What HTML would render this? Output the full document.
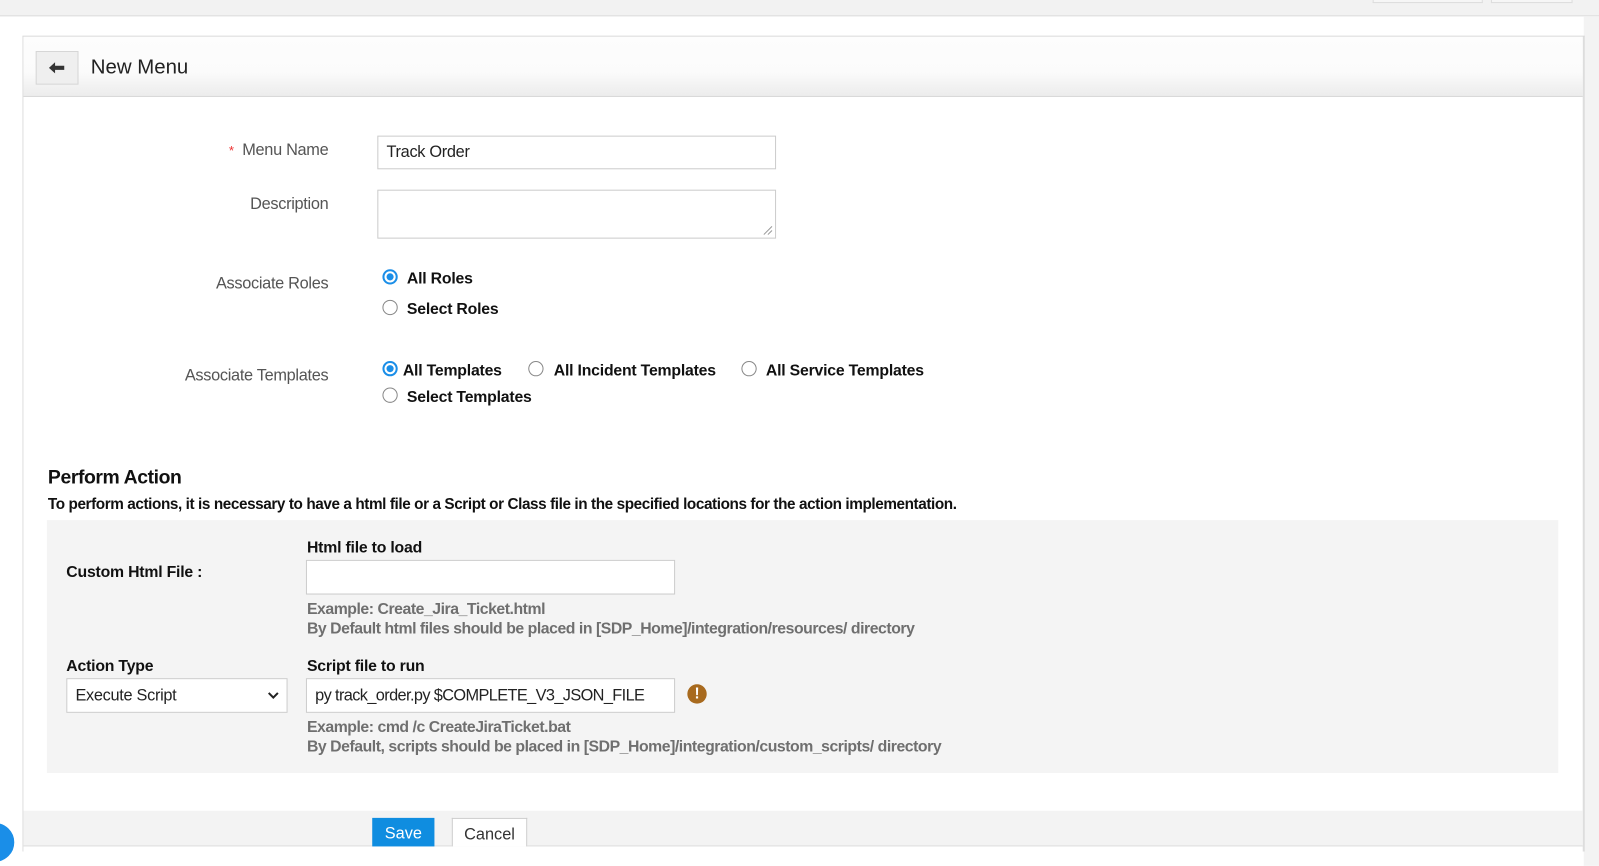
<!DOCTYPE html>
<html><head><meta charset="utf-8"><style>
*{box-sizing:border-box;margin:0;padding:0}
html,body{width:1599px;height:849px;overflow:hidden;background:#fff}
#w{position:absolute;left:0;top:0;width:1568px;height:833px;transform:scale(1.0198);transform-origin:0 0;font-family:"Liberation Sans",sans-serif;color:#222}
.a{position:absolute;white-space:nowrap}
.lbl{font-size:16px;color:#555;letter-spacing:-0.3px;text-align:right;width:200px}
.b{font-weight:bold;font-size:15.5px;letter-spacing:-0.2px;color:#111}
.g{font-weight:bold;font-size:15.5px;letter-spacing:-0.45px;color:#6f6f6f}
.inp{position:absolute;border:1px solid #ccc;background:#fff;font-size:16px;letter-spacing:-0.3px;padding-left:8px;color:#222}
.r{position:absolute;width:15px;height:15px;border-radius:50%;border:1px solid #888;background:#fff}
.r.on{border:2px solid #1a8ee8}
.r.on:after{content:"";position:absolute;left:2px;top:2px;width:7px;height:7px;border-radius:50%;background:#1a8ee8}
</style></head><body><div id="w">
<div class="a" style="left:0;top:0;width:1568px;height:16px;background:#f2f2f2;border-bottom:1px solid #ddd"></div>
<div class="a" style="left:1346px;top:0;width:108px;height:3px;border:1px solid #ddd;border-top:none;background:#f6f6f6"></div>
<div class="a" style="left:1462px;top:0;width:80px;height:3px;border:1px solid #ddd;border-top:none;background:#f6f6f6"></div>
<div class="a" style="left:1553px;top:16px;width:20px;height:833px;background:#f3f3f3"></div>
<div class="a" style="left:22px;top:35px;width:1532px;height:800px;border-left:1px solid #ddd;border-top:1px solid #d6d6d6;border-right:2px solid #ddd"></div>
<div class="a" style="left:23px;top:36px;width:1529px;height:59px;background:linear-gradient(#fdfdfd 0%,#fbfbfb 60%,#ececec 100%);border-bottom:1px solid #d4d4d4"></div>
<div class="a" style="left:35px;top:50px;width:42px;height:33px;background:#efefef;border:1px solid #d6d6d6"></div>
<svg class="a" style="left:47px;top:60px" width="18" height="13" viewBox="0 0 18 13"><path d="M1 6.5L7 1V4.5H16V8.5H7V12Z" fill="#333"/></svg>
<div class="a" style="left:89px;top:55px;font-size:20px;color:#222">New Menu</div>

<div class="a lbl" style="left:122px;top:139px"><span style="color:#e33;font-size:13px">*</span>&nbsp; Menu Name</div>
<div class="inp" style="left:370px;top:133px;width:391px;height:33px;line-height:32px">Track Order</div>
<div class="a lbl" style="left:122px;top:192px">Description</div>
<div class="inp" style="left:370px;top:186px;width:391px;height:48px"></div>
<svg class="a" style="left:748px;top:221px" width="10" height="10"><path d="M9 1L1 9M9 5L5 9" stroke="#999"/></svg>

<div class="a lbl" style="left:122px;top:270px">Associate Roles</div>
<div class="r on" style="left:375px;top:264px"></div><div class="a b" style="left:399px;top:265px">All Roles</div>
<div class="r" style="left:375px;top:294px"></div><div class="a b" style="left:399px;top:295px">Select Roles</div>

<div class="a lbl" style="left:122px;top:360px">Associate Templates</div>
<div class="r on" style="left:375px;top:354px"></div><div class="a b" style="left:395px;top:355px">All Templates</div>
<div class="r" style="left:518px;top:354px"></div><div class="a b" style="left:543px;top:355px">All Incident Templates</div>
<div class="r" style="left:727px;top:354px"></div><div class="a b" style="left:751px;top:355px">All Service Templates</div>
<div class="r" style="left:375px;top:380px"></div><div class="a b" style="left:399px;top:381px">Select Templates</div>

<div class="a" style="left:47px;top:458px;font-size:19px;font-weight:bold;letter-spacing:-0.4px;color:#111">Perform Action</div>
<div class="a b" style="left:47px;top:486px;font-size:15px;letter-spacing:-0.4px">To perform actions, it is necessary to have a html file or a Script or Class file in the specified locations for the action implementation.</div>

<div class="a" style="left:46px;top:510px;width:1482px;height:248px;background:#f4f4f4"></div>
<div class="a b" style="left:65px;top:553px">Custom Html File :</div>
<div class="a b" style="left:301px;top:529px">Html file to load</div>
<div class="inp" style="left:300px;top:549px;width:362px;height:34px"></div>
<div class="a g" style="left:301px;top:589px">Example: Create_Jira_Ticket.html</div>
<div class="a g" style="left:301px;top:608px">By Default html files should be placed in [SDP_Home]/integration/resources/ directory</div>

<div class="a b" style="left:65px;top:645px">Action Type</div>
<div class="inp" style="left:65px;top:665px;width:217px;height:34px;line-height:33px">Execute Script</div>
<svg class="a" style="left:262px;top:678px" width="12" height="9"><path d="M1.5 1.5L6 6L10.5 1.5" stroke="#222" stroke-width="2" fill="none"/></svg>
<div class="a b" style="left:301px;top:645px">Script file to run</div>
<div class="inp" style="left:300px;top:665px;width:362px;height:34px;line-height:33px;letter-spacing:-0.6px">py track_order.py $COMPLETE_V3_JSON_FILE</div>
<div class="a" style="left:674px;top:671px;width:19px;height:19px;border-radius:50%;background:#a86a1e;color:#fff;font-weight:bold;font-size:15px;text-align:center;line-height:19px">!</div>
<div class="a g" style="left:301px;top:705px">Example: cmd /c CreateJiraTicket.bat</div>
<div class="a g" style="left:301px;top:724px">By Default, scripts should be placed in [SDP_Home]/integration/custom_scripts/ directory</div>

<div class="a" style="left:23px;top:795px;width:1529px;height:35px;background:#f3f3f3;border-bottom:1px solid #ddd"></div>
<div class="a" style="left:365px;top:802px;width:61px;height:28px;background:#0f8de0;color:#fff;font-size:16px;text-align:center;line-height:32px">Save</div>
<div class="a" style="left:443px;top:802px;width:74px;height:28px;background:#fff;border:1px solid #ccc;border-bottom:none;font-size:16px;color:#333;text-align:center;line-height:32px">Cancel</div>
<div class="a" style="left:-26px;top:805px;width:42px;height:42px;border-radius:50%;background:#1a8ee8;border:2px solid #fff"></div>
</div></body></html>
